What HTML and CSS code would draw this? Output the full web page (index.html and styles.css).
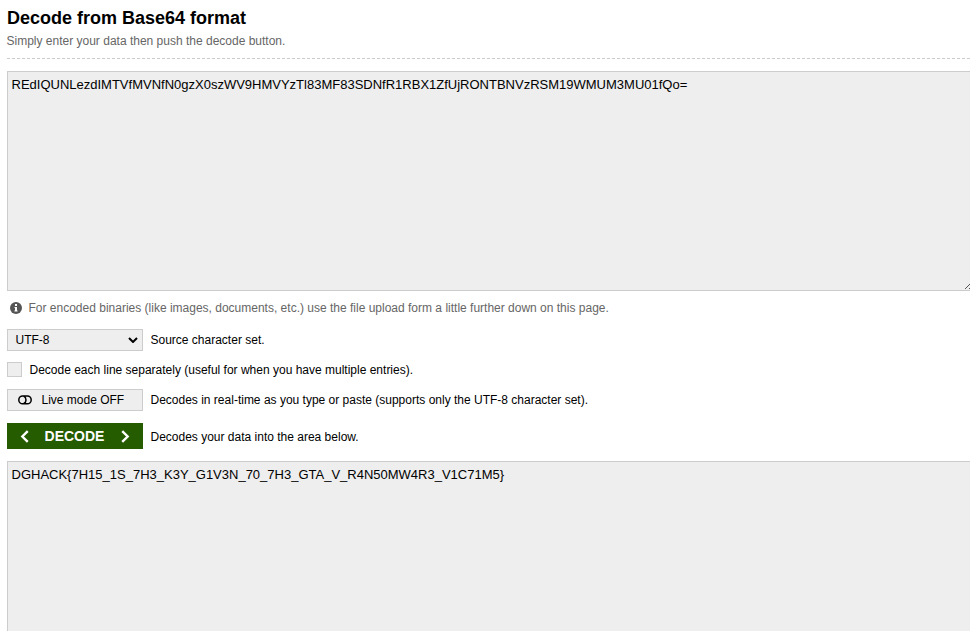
FILE: index.html
```html
<!DOCTYPE html>
<html lang="en">
<head>
<meta charset="utf-8">
<title>Base64 Decode</title>
<link rel="stylesheet" href="styles.css">
</head>
<body>
<main class="page">
  <header class="intro">
    <h1 class="title">Decode from Base64 format</h1>
    <p class="subtitle">Simply enter your data then push the decode button.</p>
  </header>
  <div class="area area-input"><span class="data">REdIQUNLezdIMTVfMVNfN0gzX0szWV9HMVYzTl83MF83SDNfR1RBX1ZfUjRONTBNVzRSM19WMUM3MU01fQo=</span>
    <svg class="grip" viewBox="0 0 5 7"><path d="M0 6L5 1M4 6L5 5"/></svg>
  </div>
  <p class="note">
    <svg class="info" viewBox="0 0 12 12"><circle cx="6" cy="6" r="6"/><path d="M5 2h2v2H5zM4.5 5H7v3.5h.6v1H4.4v-1H5V6h-.5z"/></svg>
    <span>For encoded binaries (like images, documents, etc.) use the file upload form a little further down on this page.</span>
  </p>
  <div class="row">
    <div class="control select"><span>UTF-8</span><svg class="caret" viewBox="0 0 10 6"><path d="M1 1l4 4 4-4"/></svg></div>
    <span>Source character set.</span>
  </div>
  <div class="row row-lines"><span class="check"></span><span>Decode each line separately (useful for when you have multiple entries).</span></div>
  <div class="row row-live">
    <div class="control live"><svg class="toggle" viewBox="0 0 14 10"><path d="M4.7 1H9.3a3.9 3.9 0 0 1 0 7.8H4.7a3.9 3.9 0 0 1 0-7.8zM5.6 1.1a4.2 4.2 0 0 1 0 7.6"/></svg><span>Live mode OFF</span></div>
    <span>Decodes in real-time as you type or paste (supports only the UTF-8 character set).</span>
  </div>
  <div class="row row-decode">
    <div class="decode"><svg class="chev" viewBox="0 0 8 12"><path d="M7 1L2 6l5 5"/></svg><span>DECODE</span><svg class="chev" viewBox="0 0 8 12"><path d="M1 1l5 5-5 5"/></svg></div>
    <span class="decode-text">Decodes your data into the area below.</span>
  </div>
  <div class="area area-output"><span class="data">DGHACK{7H15_1S_7H3_K3Y_G1V3N_70_7H3_GTA_V_R4N50MW4R3_V1C71M5}</span></div>
</main>
</body>
</html>
```
FILE: styles.css
```css
* { box-sizing: border-box; }
html, body { margin: 0; height: 631px; overflow: hidden; background: #fff; }
body { font: 12px/18px "Liberation Sans", Arial, sans-serif; color: #000; }
.page { width: 970px; padding: 7px 0 0 7px; }
.intro { height: 52px; border-bottom: 1px dashed #ccc; }
.title { margin: 0; font-size: 18px; line-height: 22px; }
.subtitle { margin: 3px 0 0 -0.5px; color: #666; }
.area { position: relative; border: 1px solid #ccc; border-right: 0; background: #eee; padding: 4px 3.5px; font-size: 13px; line-height: 17px; }
.area-input { height: 220px; margin-top: 12px; }
.area-output { height: 190px; margin-top: 12px; }
.data { display: block; white-space: nowrap; }
.grip { position: absolute; right: 0; bottom: 0; width: 5px; height: 7px; fill: none; stroke: #555; }
.note { display: flex; align-items: center; gap: 7px; margin: 8px 0 12px; padding-left: 2.5px; color: #666; height: 18px; }
.info { width: 12px; height: 12px; fill: #555; }
.info path { fill: #fff; }
.row { display: flex; align-items: center; gap: 7.5px; white-space: nowrap; }
.control { display: flex; align-items: center; width: 136px; height: 22px; background: #eee; border: 1px solid #ccc; }
.select { justify-content: space-between; padding: 0 4px 0 7.5px; }
.caret { width: 10px; height: 6px; fill: none; stroke: #000; stroke-width: 2; }
.row-lines { height: 18px; margin-top: 10px; }
.check { width: 15px; height: 15px; margin-bottom: 1px; background: #eee; border: 1px solid #ccc; }
.row-live { margin-top: 10px; }
.live { padding-left: 9.5px; gap: 10px; }
.toggle { width: 14px; height: 10px; fill: none; stroke: #000; stroke-width: 1.5; }
.row-decode { margin-top: 12px; }
.decode { display: flex; align-items: center; justify-content: space-between; width: 136px; height: 26px; padding: 0 13.5px 0 12.5px; background: #265c00; color: #fff; font-size: 14px; font-weight: bold; }
.decode-text { padding-top: 2px; }
.chev { width: 9px; height: 13px; fill: none; stroke: #fff; stroke-width: 2.2; }
```
